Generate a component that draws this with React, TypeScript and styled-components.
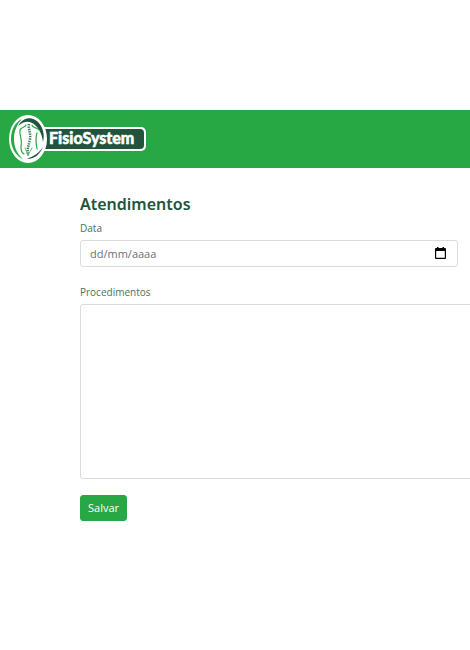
import React from "react";
import styled, { createGlobalStyle } from "styled-components";

const GlobalStyle = createGlobalStyle`
  *, *::before, *::after { box-sizing: border-box; }
  body {
    margin: 0;
    background: #fff;
    color: #22543d;
    font-family: "Open Sans", "Noto Sans", sans-serif;
    overflow-x: hidden;
  }
`;

const Page = styled.div`
  padding-top: 110px;
`;

const Header = styled.header`
  display: flex;
  align-items: center;
  height: 58px;
  padding-left: 9px;
  background: #28a745;
`;

const Brand = styled.a`
  display: flex;
`;

const Main = styled.main`
  padding: 25px 0 40px 80px;
  overflow: hidden;
`;

const Title = styled.h1`
  margin: 0;
  font-size: 16px;
  line-height: 22px;
  font-weight: 600;
  font-family: "Noto Sans", "Open Sans", sans-serif;
`;

const Form = styled.form`
  display: flex;
  flex-direction: column;
`;

const Field = styled.div<{ $bleed?: boolean }>`
  display: flex;
  flex-direction: column;
  margin-top: ${(p) => (p.$bleed ? "16px" : "4px")};
  margin-right: ${(p) => (p.$bleed ? "-20px" : "12px")};
`;

const Label = styled.label`
  margin-bottom: 3px;
  font-size: 10px;
  line-height: 18px;
  color: #457460;
`;

const DateBox = styled.div`
  display: flex;
  align-items: center;
  height: 27px;
  padding: 0 10px 0 9px;
  border: 1px solid #d8dce0;
  border-radius: 3px;
  background: #fff;
`;

const DateInput = styled.input`
  flex: 1;
  min-width: 0;
  padding: 0;
  border: 0;
  outline: 0;
  background: transparent;
  font: inherit;
  font-size: 11px;
  line-height: 16px;
  color: #495057;
  &::placeholder { color: #6a7177; opacity: 1; }
`;

const PickerButton = styled.button`
  display: flex;
  padding: 0;
  border: 0;
  background: none;
  cursor: pointer;
`;

const TextArea = styled.textarea`
  height: 175px;
  padding: 6px 9px;
  border: 1px solid #d8dce0;
  border-radius: 3px;
  resize: none;
  font: inherit;
  font-size: 11px;
  color: #495057;
`;

const SaveButton = styled.button`
  align-self: flex-start;
  height: 26px;
  margin-top: 16px;
  padding: 0 7px;
  border: 1px solid #28a745;
  border-radius: 3px;
  background: #28a745;
  color: #fff;
  font: inherit;
  font-size: 11px;
  line-height: 16px;
  cursor: pointer;
`;

const Logo = () => (
  <svg width="138" height="50" viewBox="0 0 138 50" role="img" aria-label="FisioSystem">
    <rect x="28" y="13" width="109" height="24" rx="5" fill="#fff" />
    <rect x="30" y="15" width="105" height="20" rx="4" fill="#22543d" />
    <ellipse cx="19" cy="25" rx="19" ry="24" fill="#fff" />
    <path d="M13 5C6 8 2 16 2 25c0 9 5 17 12 20C8 40 5 33 5 25S8 10 13 5Z" fill="#28a745" />
    <path d="M9 12C14 3 23 2 29 8c5 5 7 13 5 20-1-7-3-12-7-16C21 6 15 7 9 12Z" fill="#22543d" />
    <path d="M34 33c-3 7-8 12-16 12 7-3 12-6 16-12Z" fill="#22543d" />
    <g fill="none" strokeLinecap="round">
      <path d="M17 11c-1 3-5 2-6 5-1 6 3 9 1 17 0 4 1 6 3 7" stroke="#28a745" strokeWidth="1.2" />
      <path d="M23 11c0 3 5 2 7 5M28 19c-2 6-1 11 0 16" stroke="#28a745" strokeWidth="1.2" />
      <path d="M20 10c-1 5 2 9 1 15-1 6-3 9-2 15" stroke="#41835f" strokeWidth="2.6" strokeDasharray="1.4 1" strokeLinecap="butt" />
      <path d="M16 34c1 3 2 4 3 8 1-4 3-5 4-8" stroke="#65ad7b" strokeWidth="1" />
    </g>
    <text
      x="40" y="30" fill="#fff" stroke="#fff" strokeWidth="0.5"
      fontFamily='Lato, "Open Sans", sans-serif' fontSize="16" fontWeight="900"
    >
      FisioSystem
    </text>
  </svg>
);

const CalendarIcon = () => (
  <svg width="13" height="13" viewBox="0 0 13 13" aria-hidden="true">
    <path d="M3 0h1.5v1h4V0H10v1h1q1 0 1 1v9q0 1-1 1H2q-1 0-1-1V2q0-1 1-1h1ZM2.2 4v6.8h8.6V4Z" fill="#000" fillRule="evenodd" />
  </svg>
);

export default function App() {
  return (
    <>
      <GlobalStyle />
      <Page>
        <Header>
          <Brand href="#" aria-label="FisioSystem">
            <Logo />
          </Brand>
        </Header>
        <Main>
          <Title>Atendimentos</Title>
          <Form onSubmit={(event) => event.preventDefault()}>
            <Field>
              <Label htmlFor="date">Data</Label>
              <DateBox>
                <DateInput id="date" type="text" placeholder="dd/mm/aaaa" inputMode="numeric" />
                <PickerButton type="button" aria-label="Abrir calendário">
                  <CalendarIcon />
                </PickerButton>
              </DateBox>
            </Field>
            <Field $bleed>
              <Label htmlFor="procedures">Procedimentos</Label>
              <TextArea id="procedures" />
            </Field>
            <SaveButton type="submit">Salvar</SaveButton>
          </Form>
        </Main>
      </Page>
    </>
  );
}
